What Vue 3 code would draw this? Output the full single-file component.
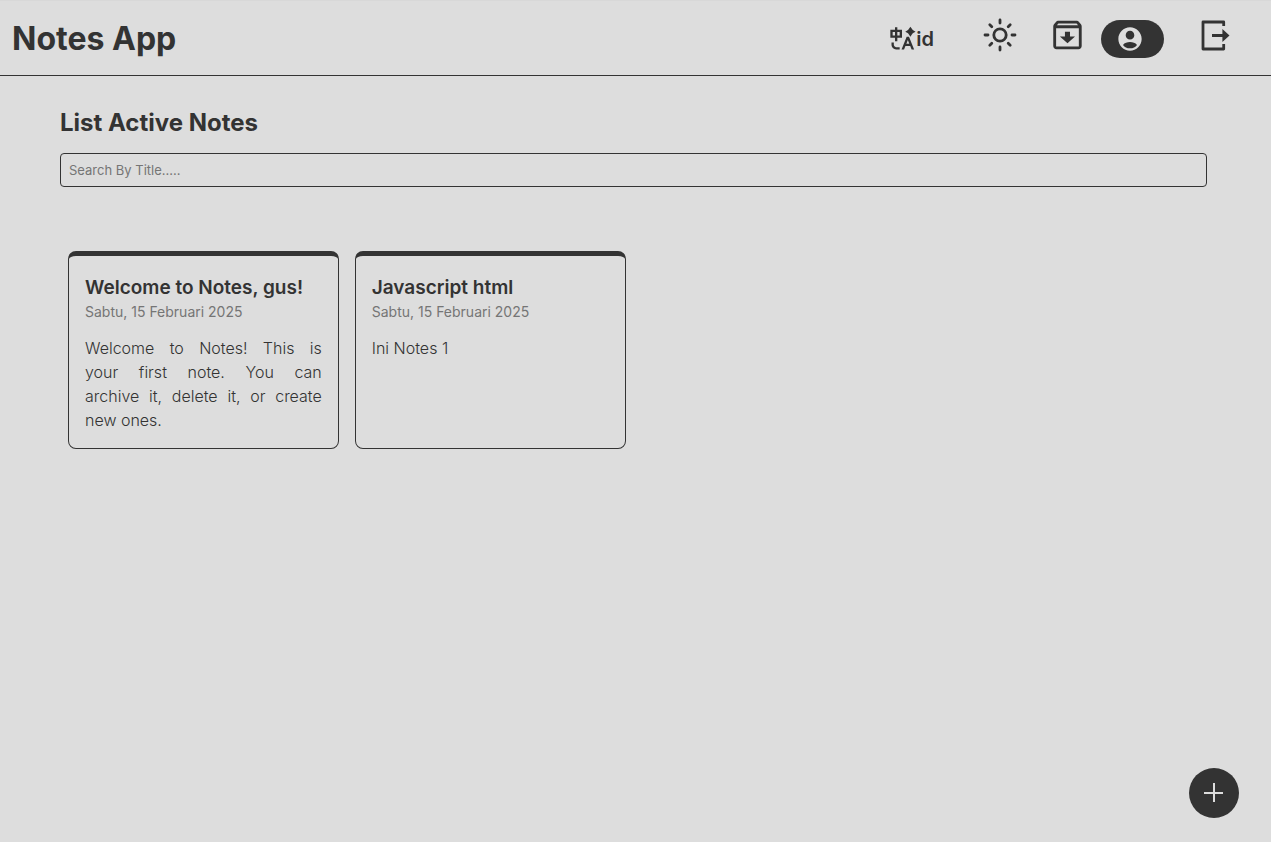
<script setup>
import { ref, computed } from 'vue'

const query = ref('')
const notes = [
  {
    id: 1,
    title: 'Welcome to Notes, gus!',
    date: 'Sabtu, 15 Februari 2025',
    body: 'Welcome to Notes! This is your\u00a0first note. You can archive\u00a0it, delete it, or create new ones.',
  },
  { id: 2, title: 'Javascript html', date: 'Sabtu, 15 Februari 2025', body: 'Ini Notes 1' },
]
const shown = computed(() =>
  notes.filter((n) => n.title.toLowerCase().includes(query.value.toLowerCase()))
)
</script>

<template>
  <div class="app">
    <header class="header">
      <h1 class="brand">Notes App</h1>
      <nav class="nav">
        <button class="lang" type="button">
          <svg width="28" height="28" viewBox="0 0 24 24" fill="currentColor" aria-hidden="true">
            <path d="M5 15V17C5 18.0544 5.81588 18.9182 6.85074 18.9945L7 19H10V21H7C4.79086 21 3 19.2091 3 17V15H5ZM18 10L22.4 21H20.245L19.044 18H14.954L13.755 21H11.601L16 10H18ZM17 12.8852L15.753 16H18.245L17 12.8852ZM8 2V4H12V11H8V14H6V11H2V4H6V2H8ZM6 6H4V9H6V6ZM10 6H8V9H10V6Z" />
            <path d="M19.2 1.4 L20.6 3.5 Q21 4.1 21.6 4.5 L23.6 5.7 L21.6 6.9 Q21 7.3 20.6 7.9 L19.2 10 L17.8 7.9 Q17.4 7.3 16.8 6.9 L14.8 5.7 L16.8 4.5 Q17.4 4.1 17.8 3.5 Z" />
          </svg>
          <span>id</span>
        </button>
        <button class="icon" type="button" aria-label="Theme">
          <svg width="36" height="36" viewBox="0 0 36 36" fill="none" stroke="currentColor" stroke-width="2.8" aria-hidden="true">
            <circle cx="18" cy="18" r="6.2" />
            <path stroke-linecap="round" d="M18 3v3M18 30v3M3 18h3M30 18h3M7.8 7.8l2 2M26.2 26.2l2 2M7.8 28.2l2-2M26.2 9.8l2-2" />
          </svg>
        </button>
        <a class="icon" href="#archive" aria-label="Archive">
          <svg width="36" height="36" viewBox="0.3 0.6 22.8 22.8" fill="currentColor" aria-hidden="true">
            <path d="M20.54 5.23l-1.39-1.68C18.88 3.21 18.47 3 18 3H6c-.47 0-.88.21-1.16.55L3.46 5.23C3.17 5.57 3 6.02 3 6.5V19c0 1.1.9 2 2 2h14c1.1 0 2-.9 2-2V6.5c0-.48-.17-.93-.46-1.27zM6.24 4.7h11.52l.95 1.2H5.3l.94-1.2zM4.8 19.3V7.7h14.4v11.6H4.8zM13.6 10h-3.2v3H7.2l4.8 4.3 4.8-4.3h-3.2z" />
          </svg>
        </a>
        <a class="profile" href="#profile" aria-label="Profile">
          <svg width="28" height="28" viewBox="0 0 24 24" fill="currentColor" aria-hidden="true">
            <path d="M12 2C6.48 2 2 6.48 2 12s4.48 10 10 10 10-4.48 10-10S17.52 2 12 2zm0 3c2.04 0 3.7 1.66 3.7 3.7S14.04 12.4 12 12.4 8.3 10.74 8.3 8.7 9.96 5 12 5zm0 15c-2.6 0-4.7-1-6-2.9 1.3-1.7 3.6-2.5 6-2.5s4.7.8 6 2.5C16.7 19 14.6 20 12 20z" />
          </svg>
        </a>
        <button class="icon logout" type="button" aria-label="Log out">
          <svg width="36" height="36" viewBox="0 0 36 36" fill="currentColor" aria-hidden="true">
            <path d="M26.7 9V5H6V32H26.7V27" fill="none" stroke="currentColor" stroke-width="2.8" stroke-linejoin="round" />
            <path d="M15 17.1h10.4v-5l7.1 6.4-7.1 6.4v-5H15z" />
          </svg>
        </button>
      </nav>
    </header>

    <main class="main">
      <h2 class="heading">List Active Notes</h2>
      <input v-model="query" class="search" type="text" aria-label="Search By Title" placeholder="Search By Title....." />
      <section class="grid">
        <article v-for="note in shown" :key="note.id" class="card">
          <h3 class="title">{{ note.title }}</h3>
          <p class="date">{{ note.date }}</p>
          <p class="body">{{ note.body }}</p>
        </article>
      </section>
    </main>

    <button class="add" type="button" aria-label="Add note">
      <svg width="30" height="30" viewBox="0 0 30 30" fill="none" stroke="currentColor" stroke-width="2" aria-hidden="true">
        <path d="M15 5v19M5 15h19" />
      </svg>
    </button>
  </div>
</template>

<style>
body {
  margin: 0;
  background: #ddd;
}
</style>

<style scoped>
.app {
  min-height: 100vh;
  font-family: Inter, "Liberation Sans", sans-serif;
  color: #333;
}
.app *,
.app *::before {
  box-sizing: border-box;
}
h1, h2, h3, p {
  margin: 0;
}
button {
  border: 0;
  background: none;
  color: inherit;
  font: inherit;
  cursor: pointer;
}
a {
  color: inherit;
}
svg {
  display: block;
}
.header {
  display: flex;
  align-items: center;
  justify-content: space-between;
  min-height: 76px;
  padding: 2px 22px 0 12px;
  border-top: 1px solid #d8d8d8;
  border-bottom: 1px solid #333;
}
.brand {
  font-size: 32px;
  line-height: 40px;
  font-weight: 700;
}
.nav {
  display: flex;
  align-items: center;
}
.lang {
  display: flex;
  align-items: center;
  margin-right: 33px;
  padding: 0;
  font-size: 20px;
  line-height: 24px;
  font-weight: 600;
}
.icon {
  display: flex;
  padding: 0 16px 8px 15px;
}
.profile {
  display: flex;
  padding: 5px 20px 5px 15px;
  border-radius: 20px;
  background: #333;
  color: #ddd;
}
.logout {
  margin-left: 18px;
}
.main {
  padding: 32px 64px 32px 60px;
}
.heading {
  font-size: 24px;
  line-height: 30px;
  font-weight: 700;
}
.search {
  display: block;
  width: 100%;
  height: 34px;
  margin-top: 15px;
  padding: 8px;
  border: 1px solid #333;
  border-radius: 4px;
  background: transparent;
  color: #333;
  font-family: inherit;
  font-size: 13px;
}
.search::placeholder {
  color: #757575;
}
.grid {
  display: grid;
  grid-template-columns: repeat(auto-fill, minmax(240px, 1fr));
  gap: 16px;
  margin-top: 64px;
  padding: 0 8px;
}
.card {
  padding: 20px 16px 16px;
  border: 1px solid #333;
  border-top-width: 5px;
  border-radius: 8px;
}
.title {
  font-size: 19px;
  line-height: 24px;
  font-weight: 600;
}
.date {
  margin-top: 2px;
  font-size: 14px;
  line-height: 20px;
  color: #757575;
}
.body {
  margin-top: 14px;
  font-size: 16px;
  line-height: 24px;
  font-weight: 300;
  text-align: justify;
}
.add {
  position: fixed;
  right: 32px;
  bottom: 24px;
  display: flex;
  align-items: center;
  justify-content: center;
  width: 50px;
  height: 50px;
  padding: 0;
  border-radius: 50%;
  background: #333;
  color: #ddd;
}
</style>
